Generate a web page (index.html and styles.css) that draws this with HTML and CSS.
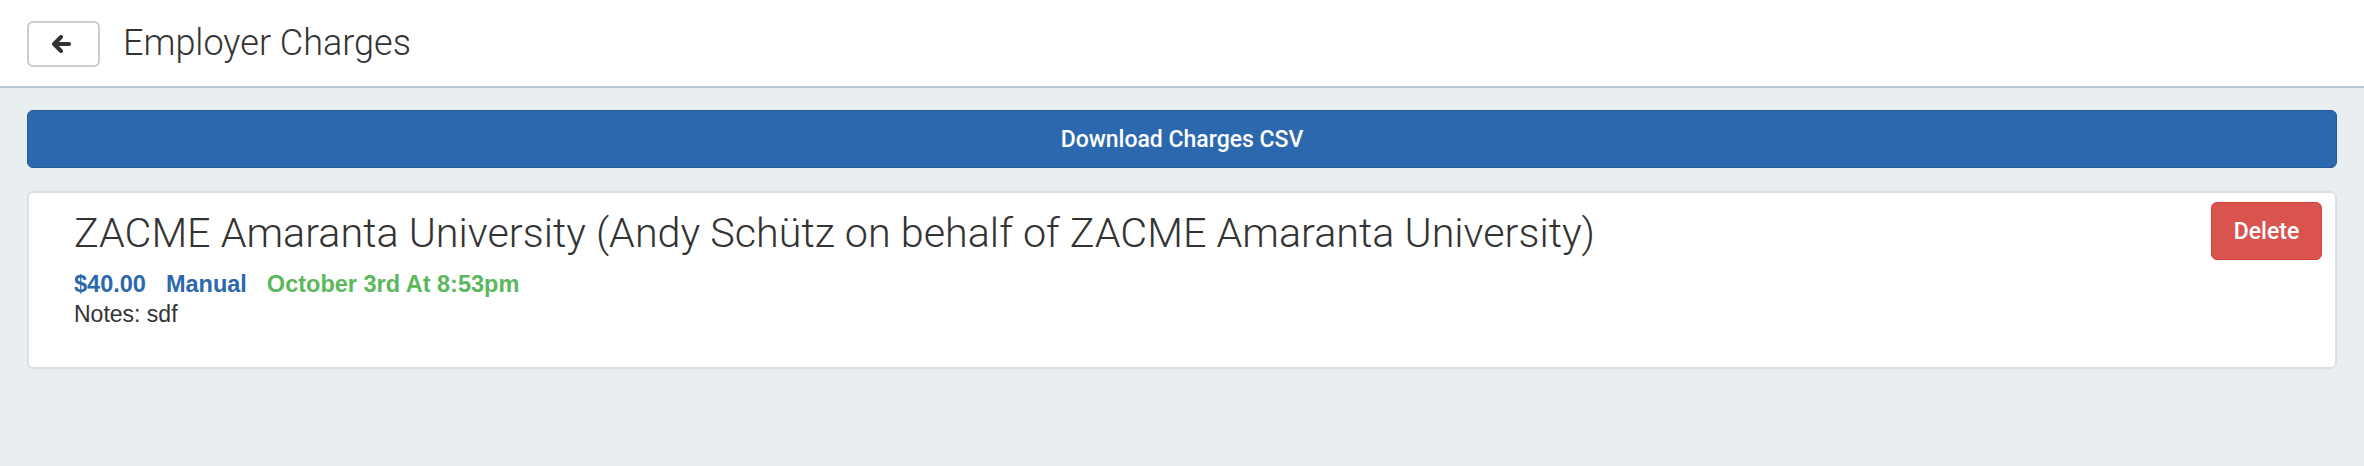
FILE: index.html
```html
<!DOCTYPE html>
<html lang="en">
<head>
  <meta charset="UTF-8">
  <meta name="viewport" content="width=device-width, initial-scale=1.0">
  <title>Employer Charges</title>
  <link rel="stylesheet" href="styles.css">
</head>
<body>
  <header class="top-bar">
    <button class="back-button" aria-label="Back">
      <svg width="20" height="18" viewBox="0 0 20 18">
        <path d="M10 2 L3 9 L10 16 M3.5 9 H18" fill="none" stroke="#333" stroke-width="4" stroke-linecap="round" stroke-linejoin="round"/>
      </svg>
    </button>
    <h1 class="page-title">Employer Charges</h1>
  </header>

  <main class="content">
    <button class="download-button">Download Charges CSV</button>

    <div class="charge-card">
      <div class="charge-info">
        <h2 class="charge-title">ZACME Amaranta University (Andy Schütz on behalf of ZACME Amaranta University)</h2>
        <div class="charge-meta">
          <span class="amount">$40.00</span>
          <span class="method">Manual</span>
          <span class="date">October 3rd At 8:53pm</span>
        </div>
        <div class="charge-notes">Notes: sdf</div>
      </div>
      <button class="delete-button">Delete</button>
    </div>
  </main>
</body>
</html>
```

FILE: styles.css
```css
body {
  margin: 0;
  padding: 0;
  background: #e9eef1;
  font-family: Roboto, Arial, sans-serif;
  color: #333;
  min-height: 100vh;
}

.top-bar {
  display: flex;
  align-items: center;
  height: 86px;
  padding: 0 27px;
  background: #fff;
  border-bottom: 2px solid #b9c7d1;
  box-sizing: content-box;
}

.back-button {
  display: flex;
  align-items: center;
  justify-content: center;
  width: 73px;
  height: 46px;
  padding: 0 6px 0 0;
  background: #fff;
  border: 2px solid #ccc;
  border-radius: 6px;
  margin-top: 2px;
  cursor: pointer;
}

.page-title {
  margin: 0 0 0 23px;
  font-size: 36px;
  font-weight: 300;
  color: #333;
}

.content {
  padding: 22px 27px;
}

.download-button {
  display: block;
  width: 100%;
  height: 58px;
  background: #2c68ae;
  border: 1px solid #285a94;
  border-radius: 6px;
  color: #fff;
  font-family: Roboto, Arial, sans-serif;
  font-size: 23px;
  font-weight: 500;
  cursor: pointer;
}

.charge-card {
  display: flex;
  align-items: flex-start;
  margin-top: 23px;
  height: 178px;
  box-sizing: border-box;
  padding: 9px 13px 0 45px;
  background: #fff;
  border: 2px solid #dcdfe2;
  border-radius: 6px;
}

.charge-info {
  flex: 1;
}

.charge-title {
  margin: 6px 0 0;
  font-size: 41.3px;
  font-weight: 300;
  line-height: 50px;
  color: #333;
}

.charge-meta {
  display: flex;
  gap: 20px;
  margin-top: 12px;
  font-family: "Liberation Sans", Arial, sans-serif;
  font-size: 23.5px;
  font-weight: bold;
  line-height: 28px;
}

.amount,
.method {
  color: #2c68ae;
}

.date {
  color: #5cb85c;
}

.charge-notes {
  font-family: "Liberation Sans", Arial, sans-serif;
  font-size: 23px;
  line-height: 32px;
  color: #333;
}

.delete-button {
  width: 111px;
  height: 58px;
  background: #d9534f;
  border: 1px solid #d43f3a;
  border-radius: 6px;
  color: #fff;
  font-family: Roboto, Arial, sans-serif;
  font-size: 23px;
  font-weight: 500;
  cursor: pointer;
}
```
